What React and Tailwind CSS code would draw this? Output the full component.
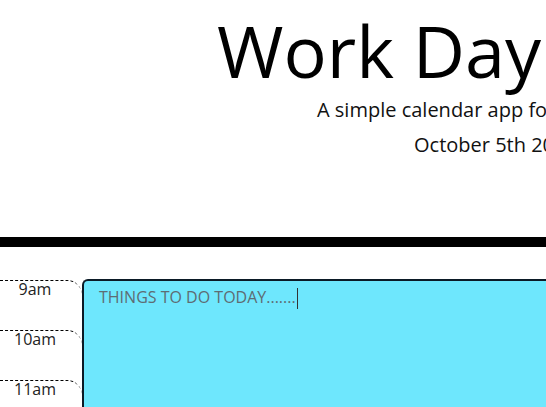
export default function App() {
  const hours = ["9am", "10am", "11am"];
  return (
    <div className="w-[546px] h-[407px] overflow-hidden bg-white font-['Open_Sans',sans-serif] text-black">
      <header className="border-b-[10px] border-black pt-[7px] pb-[77px]">
        <h1 className="whitespace-nowrap pl-[217px] text-[72px] font-normal leading-[86px]">
          Work Day Scheduler
        </h1>
        <p className="mt-[2px] whitespace-nowrap pl-[317px] text-[20px] leading-[30px] text-[#111]">
          A simple calendar app for scheduling your work day
        </p>
        <p className="mt-[5px] whitespace-nowrap pl-[414px] text-[20px] leading-[30px] text-[#111]">
          October 5th 2020
        </p>
      </header>
      <div className="mt-[32px] flex">
        <div className="w-[82px] shrink-0 pt-[1px]">
          {hours.map((h) => (
            <div
              key={h}
              className="h-[50px] border-t border-dashed border-black rounded-tr-[15px] pr-[12px] text-center text-[16px] leading-[17px] text-[#222]"
            >
              {h}
            </div>
          ))}
        </div>
        <div className="h-[200px] flex-1 rounded-tl-[6px] border-2 border-r-0 border-[#0b1a26] bg-[#6ee7fd] pl-[15px] pt-[4px] text-[16px] leading-[24px] text-[#5e6c73] whitespace-nowrap">
          THINGS TO DO TODAY.......
          <span className="ml-[1px] inline-block h-[21px] w-[1px] bg-[#333] align-middle"></span>
        </div>
      </div>
    </div>
  );
}
